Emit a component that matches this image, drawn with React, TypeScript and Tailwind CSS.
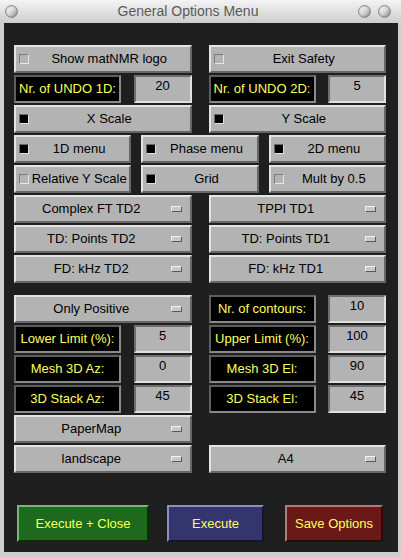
import React from 'react';

const font = { fontFamily: '"Liberation Sans", Arial, sans-serif' };

const raised =
  'bg-[#b3b3b3] border-2 border-t-[#e4e4e4] border-l-[#e4e4e4] border-b-[#666666] border-r-[#666666]';

function Check({ on }: { on: boolean }) {
  return on ? (
    <span className="ml-[3px] w-[10px] h-[10px] bg-black border border-t-[#6a6a6a] border-l-[#6a6a6a] border-b-[#e0e0e0] border-r-[#e0e0e0] shrink-0" />
  ) : (
    <span className="ml-[3px] w-[10px] h-[10px] bg-[#b3b3b3] border border-t-[#7a7a7a] border-l-[#7a7a7a] border-b-[#e6e6e6] border-r-[#e6e6e6] shrink-0" />
  );
}

function Toggle({ label, on }: { label: string; on: boolean }) {
  return (
    <div className={`${raised} h-[28px] flex items-center text-[13px] text-black`}>
      <Check on={on} />
      <span className="flex-1 text-center whitespace-nowrap">{label}</span>
    </div>
  );
}

function Popup({ label }: { label: string }) {
  return (
    <div className={`${raised} h-[28px] flex items-center text-[13px] text-black`}>
      <span className="flex-1 text-center whitespace-nowrap pl-1">{label}</span>
      <span className="w-[11px] h-[6px] bg-[#c8c8c8] border border-t-[#f2f2f2] border-l-[#f2f2f2] border-b-[#5a5a5a] border-r-[#5a5a5a] mr-[8px] ml-[8px] shrink-0" />
    </div>
  );
}

function Field({ label, value }: { label: string; value: string }) {
  return (
    <div className="flex justify-between h-[28px]">
      <div className="w-[107px] bg-black border-2 border-t-[#5e5e5e] border-l-[#5e5e5e] border-b-[#8a8a8a] border-r-[#8a8a8a] flex items-center justify-center text-[13px] text-[#ffff5c] whitespace-nowrap">
        {label}
      </div>
      <div className="w-[58px] bg-[#b3b3b3] border-2 border-t-[#6e6e6e] border-l-[#6e6e6e] border-b-[#e0e0e0] border-r-[#e0e0e0] text-center text-[13px] text-black leading-none pt-[2px]">
        {value}
      </div>
    </div>
  );
}

function Dot() {
  return (
    <span className="w-[13px] h-[13px] rounded-full bg-gradient-to-br from-white via-[#d8d8d8] to-[#8c8c8c] border border-[#8a8a8a] shadow-[inset_0_0_2px_rgba(0,0,0,0.3)]" />
  );
}

export default function App() {
  return (
    <div className="w-[401px] h-[557px] bg-[#cfcfcf] flex flex-col" style={font}>
      <div className="h-[23px] bg-gradient-to-b from-[#f4f4f4] to-[#cdcdcd] flex items-center px-[5px] shrink-0">
        <Dot />
        <span className="flex-1 text-center text-[14px] text-[#5a5a5a]">General Options Menu</span>
        <div className="flex gap-[7px] pr-[5px]">
          <Dot />
          <Dot />
        </div>
      </div>
      <div className="flex-1 mx-[4px] mb-[5px] mr-[3px] bg-[#1f1f1f] pt-[22px] pl-[10px] pr-[12px] flex flex-col">
        <div className="flex flex-col gap-[2px]">
          <div className="grid grid-cols-2 gap-[17px]">
            <Toggle label="Show matNMR logo" on={false} />
            <Toggle label="Exit Safety" on={false} />
          </div>
          <div className="grid grid-cols-2 gap-[17px]">
            <Field label="Nr. of UNDO 1D:" value="20" />
            <Field label="Nr. of UNDO 2D:" value="5" />
          </div>
          <div className="grid grid-cols-2 gap-[17px]">
            <Toggle label="X Scale" on />
            <Toggle label="Y Scale" on />
          </div>
          <div className="grid grid-cols-3 gap-[10px]">
            <Toggle label="1D menu" on />
            <Toggle label="Phase menu" on />
            <Toggle label="2D menu" on />
          </div>
          <div className="grid grid-cols-3 gap-[10px]">
            <Toggle label="Relative Y Scale" on={false} />
            <Toggle label="Grid" on />
            <Toggle label="Mult by 0.5" on={false} />
          </div>
          <div className="grid grid-cols-2 gap-[17px]">
            <Popup label="Complex FT TD2" />
            <Popup label="TPPI TD1" />
          </div>
          <div className="grid grid-cols-2 gap-[17px]">
            <Popup label="TD: Points TD2" />
            <Popup label="TD: Points TD1" />
          </div>
          <div className="grid grid-cols-2 gap-[17px]">
            <Popup label="FD: kHz TD2" />
            <Popup label="FD: kHz TD1" />
          </div>
        </div>

        <div className="flex flex-col gap-[2px] mt-[12px]">
          <div className="grid grid-cols-2 gap-[17px]">
            <Popup label="Only Positive" />
            <Field label="Nr. of contours:" value="10" />
          </div>
          <div className="grid grid-cols-2 gap-[17px]">
            <Field label="Lower Limit (%):" value="5" />
            <Field label="Upper Limit (%):" value="100" />
          </div>
          <div className="grid grid-cols-2 gap-[17px]">
            <Field label="Mesh 3D Az:" value="0" />
            <Field label="Mesh 3D El:" value="90" />
          </div>
          <div className="grid grid-cols-2 gap-[17px]">
            <Field label="3D Stack Az:" value="45" />
            <Field label="3D Stack El:" value="45" />
          </div>
          <div className="grid grid-cols-2 gap-[17px]">
            <Popup label="PaperMap" />
            <div />
          </div>
          <div className="grid grid-cols-2 gap-[17px]">
            <Popup label="landscape" />
            <Popup label="A4" />
          </div>
        </div>

        <div className="flex items-center mt-[32px] pl-[3px] pr-[3px]">
          <button className="w-[132px] h-[37px] bg-[#1d6a1d] border-2 border-t-[#7fb07f] border-l-[#7fb07f] border-b-[#0c2c0c] border-r-[#0c2c0c] text-[13px] text-[#ffff5c]">
            Execute + Close
          </button>
          <button className="ml-[18px] w-[97px] h-[37px] bg-[#34346f] border-2 border-t-[#8e8ebc] border-l-[#8e8ebc] border-b-[#14142c] border-r-[#14142c] text-[13px] text-[#ffff5c]">
            Execute
          </button>
          <button className="ml-[21px] w-[98px] h-[37px] bg-[#6a1818] border-2 border-t-[#b07a7a] border-l-[#b07a7a] border-b-[#2c0a0a] border-r-[#2c0a0a] text-[13px] text-[#ffff5c]">
            Save Options
          </button>
        </div>
      </div>
    </div>
  );
}
